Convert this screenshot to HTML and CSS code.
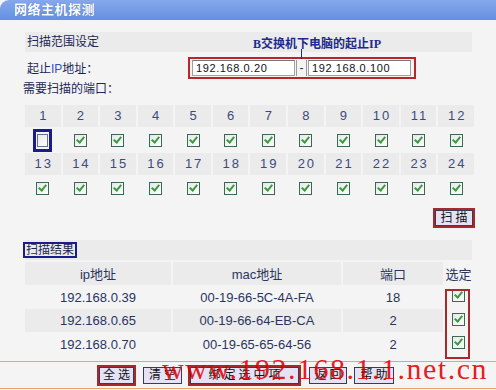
FILE: index.html
```html
<!DOCTYPE html>
<html lang="zh-CN">
<head>
    <meta charset="UTF-8">
    <title>网络主机探测</title>
    <link rel="stylesheet" href="styles.css">
</head>
<body>
    <div class="title">网络主机探测</div>
    <div class="main">
        <div class="bar">扫描范围设定</div>
        <div class="range">
            <span class="label">起止<span class="ip">IP</span>地址：</span>
            <div class="ipbox">
                <input type="text" class="ipin" value="192.168.0.20">
                <span class="dash">-</span>
                <input type="text" class="ipin" value="192.168.0.100">
            </div>
        </div>
        <div class="subtitle">需要扫描的端口：</div>
        <div class="ports">
            <div class="num">1</div><div class="num">2</div><div class="num">3</div><div class="num">4</div>
            <div class="num">5</div><div class="num">6</div><div class="num">7</div><div class="num">8</div>
            <div class="num">9</div><div class="num">10</div><div class="num">11</div><div class="num">12</div>
            <div class="chk"><span class="focus"><span class="cb"></span></span></div>
            <div class="chk"><span class="cb on"></span></div><div class="chk"><span class="cb on"></span></div>
            <div class="chk"><span class="cb on"></span></div><div class="chk"><span class="cb on"></span></div>
            <div class="chk"><span class="cb on"></span></div><div class="chk"><span class="cb on"></span></div>
            <div class="chk"><span class="cb on"></span></div><div class="chk"><span class="cb on"></span></div>
            <div class="chk"><span class="cb on"></span></div><div class="chk"><span class="cb on"></span></div>
            <div class="chk"><span class="cb on"></span></div>
            <div class="num">13</div><div class="num">14</div><div class="num">15</div><div class="num">16</div>
            <div class="num">17</div><div class="num">18</div><div class="num">19</div><div class="num">20</div>
            <div class="num">21</div><div class="num">22</div><div class="num">23</div><div class="num">24</div>
            <div class="chk"><span class="cb on"></span></div><div class="chk"><span class="cb on"></span></div>
            <div class="chk"><span class="cb on"></span></div><div class="chk"><span class="cb on"></span></div>
            <div class="chk"><span class="cb on"></span></div><div class="chk"><span class="cb on"></span></div>
            <div class="chk"><span class="cb on"></span></div><div class="chk"><span class="cb on"></span></div>
            <div class="chk"><span class="cb on"></span></div><div class="chk"><span class="cb on"></span></div>
            <div class="chk"><span class="cb on"></span></div><div class="chk"><span class="cb on"></span></div>
        </div>
        <div class="scanrow">
            <span class="mark"><button class="btn">扫描</button></span>
        </div>
        <div class="bar"><span class="focus-text">扫描结果</span></div>
        <div class="result">
            <table>
                <tr class="head">
                    <td class="c-ip">ip地址</td>
                    <td class="c-mac">mac地址</td>
                    <td class="c-port">端口</td>
                    <td class="c-sel">选定</td>
                </tr>
                <tr>
                    <td>192.168.0.39</td>
                    <td>00-19-66-5C-4A-FA</td>
                    <td>18</td>
                    <td class="c-sel"><span class="cb on"></span></td>
                </tr>
                <tr class="shade">
                    <td>192.168.0.65</td>
                    <td>00-19-66-64-EB-CA</td>
                    <td>2</td>
                    <td class="c-sel"><span class="cb on"></span></td>
                </tr>
                <tr>
                    <td>192.168.0.70</td>
                    <td>00-19-65-65-64-56</td>
                    <td>2</td>
                    <td class="c-sel"><span class="cb on"></span></td>
                </tr>
            </table>
            <div class="selmark"></div>
        </div>
    </div>
    <div class="footer">
        <span class="mark"><button class="btn w-all">全选</button></span>
        <button class="btn w-clear">清空</button>
        <span class="mark"><button class="btn w-bind">绑定选中项</button></span>
        <button class="btn w-back">返回</button>
        <button class="btn w-help">帮助</button>
    </div>

    <div class="note">B交换机下电脑的起止IP</div>
    <div class="note-line"></div>
    <div class="watermark">www.192.168.1.1.net.cn</div>
</body>
</html>
```

FILE: styles.css
```css
body {
    margin: 0;
    width: 496px;
    height: 390px;
    overflow: hidden;
    position: relative;
    background: #f4f4f4;
    font-family: "Liberation Sans", "Noto Sans CJK SC", sans-serif;
    font-size: 12px;
    color: #1d2755;
}
.title {
    height: 20px;
    line-height: 20px;
    padding-left: 14px;
    background: linear-gradient(#86a8ec, #6490e0);
    border-top-left-radius: 9px;
    color: #fff;
    font-size: 13px;
    font-weight: bold;
    letter-spacing: 0.5px;
    text-shadow: 0 0 1px #3a5fb0;
}
.main {
    padding-left: 25px;
    width: 447px;
}
.bar {
    margin-top: 12px;
    height: 20px;
    line-height: 20px;
    padding-left: 2px;
    background: #ebebeb;
}
.range {
    display: flex;
    align-items: center;
    margin-top: 5px;
    height: 21px;
}
.label {
    width: 161px;
    padding-left: 2px;
}
.ip {
    color: #3350c0;
}
.ipbox {
    display: flex;
    align-items: center;
    border: 2px solid #b8262a;
    padding: 1px 1px 1px 2px;
    width: 221px;
}
.ipin {
    width: 98px;
    height: 14px;
    padding: 0 0 0 3px;
    border: 1px solid #a0a0a0;
    border-top-color: #777;
    background: #fff;
    font-family: "Liberation Sans", sans-serif;
    font-size: 11px;
    letter-spacing: 0.6px;
    color: #111;
}
.dash {
    width: 9px;
    margin: 0 1px;
    text-align: center;
    border-left: 1px solid #9a9a9a;
    border-right: 1px solid #9a9a9a;
    line-height: 16px;
    color: #333;
}
.subtitle {
    margin-top: 3px;
    margin-left: -2px;
    height: 16px;
    line-height: 16px;
}
.ports {
    margin-top: 8px;
    display: grid;
    grid-template-columns: repeat(12, 1fr);
    grid-template-rows: 22px 26px 22px 26px;
    column-gap: 2px;
    margin-right: -2px;
}
.num {
    background: #ebebeb;
    text-align: center;
    line-height: 22px;
    font-size: 13px;
    letter-spacing: 2px;
    text-indent: 2px;
    color: #3c4a80;
}
.chk {
    display: flex;
    justify-content: center;
    align-items: center;
}
.cb {
    display: inline-block;
    position: relative;
    width: 11px;
    height: 11px;
    border: 1px solid #3e6650;
    background: linear-gradient(135deg, #e6e8ec, #fdfdfd);
}
.cb.on::after {
    content: "";
    position: absolute;
    left: 3px;
    top: 0px;
    width: 3px;
    height: 6px;
    border: solid #3b9a3b;
    border-width: 0 2px 2px 0;
    transform: rotate(40deg);
}
.focus {
    display: inline-flex;
    padding: 2px 1px;
    border: 3px solid #1b1b8c;
}
.focus .cb {
    width: 9px;
    height: 11px;
    border-color: #6a6f90;
}
.scanrow {
    display: flex;
    justify-content: flex-end;
    margin-top: 7px;
    margin-right: -3px;
    height: 20px;
}
.mark {
    display: inline-flex;
    border: 2px solid #a8282c;
}
.btn {
    font-family: "Liberation Sans", "Noto Sans CJK SC", sans-serif;
    font-size: 12px;
    letter-spacing: 3px;
    white-space: nowrap;
    height: 16px;
    line-height: 14px;
    padding: 0 0 0 3px;
    border: 1px solid #3a3a52;
    background: #e4e2f4;
    color: #111;
}
.scanrow .btn {
    width: 38px;
}
.focus-text {
    display: inline-block;
    margin-left: -4px;
    line-height: 12px;
    padding: 0 1px;
    border: 2px solid #1b1b8c;
}
.result {
    position: relative;
    margin-top: 2px;
}
.result table {
    border-collapse: separate;
    border-spacing: 2px 0;
    margin-left: -2px;
    width: 451px;
    font-size: 13px;
    color: #2a3560;
}
.result td {
    text-align: center;
    height: 24px;
    padding: 0;
}
.head td {
    height: 23px;
    background: #ebebeb;
}
.head td.c-sel,
.shade td.c-sel {
    background: none;
}
.shade td {
    background: #ebebeb;
    height: 23px;
}
.c-ip { width: 146px; }
.c-mac { width: 168px; }
.c-port { width: 100px; }
.c-sel { width: 27px; }
.selmark {
    position: absolute;
    left: 420px;
    top: 27px;
    width: 21px;
    height: 66px;
    border: 2px solid #a8282c;
}
.footer {
    position: absolute;
    left: 0;
    right: 0;
    top: 361px;
    height: 26px;
    border-top: 1px solid #eaa46a;
    border-bottom: 1px solid #eaa46a;
    display: flex;
    align-items: center;
    padding-left: 97px;
    gap: 6px;
}
.footer .btn {
    height: 17px;
}
.w-all { width: 35px; }
.w-clear { width: 39px; margin-left: 1px; }
.w-bind { width: 109px; }
.w-back { width: 38px; margin-left: 2px; }
.w-help { width: 40px; margin-left: 1px; }
.note {
    position: absolute;
    left: 253px;
    top: 34px;
    font-family: "Liberation Serif", "Noto Sans CJK SC", serif;
    font-weight: bold;
    font-size: 12px;
    color: #1c2a8e;
}
.note-line {
    position: absolute;
    left: 301px;
    top: 49px;
    width: 1px;
    height: 10px;
    background: #1c2a8e;
}
.watermark {
    position: absolute;
    left: 162px;
    top: 352px;
    font-family: "Liberation Serif", serif;
    font-size: 30px;
    letter-spacing: 1.5px;
    color: rgba(226, 0, 0, 0.88);
    white-space: nowrap;
}
```
